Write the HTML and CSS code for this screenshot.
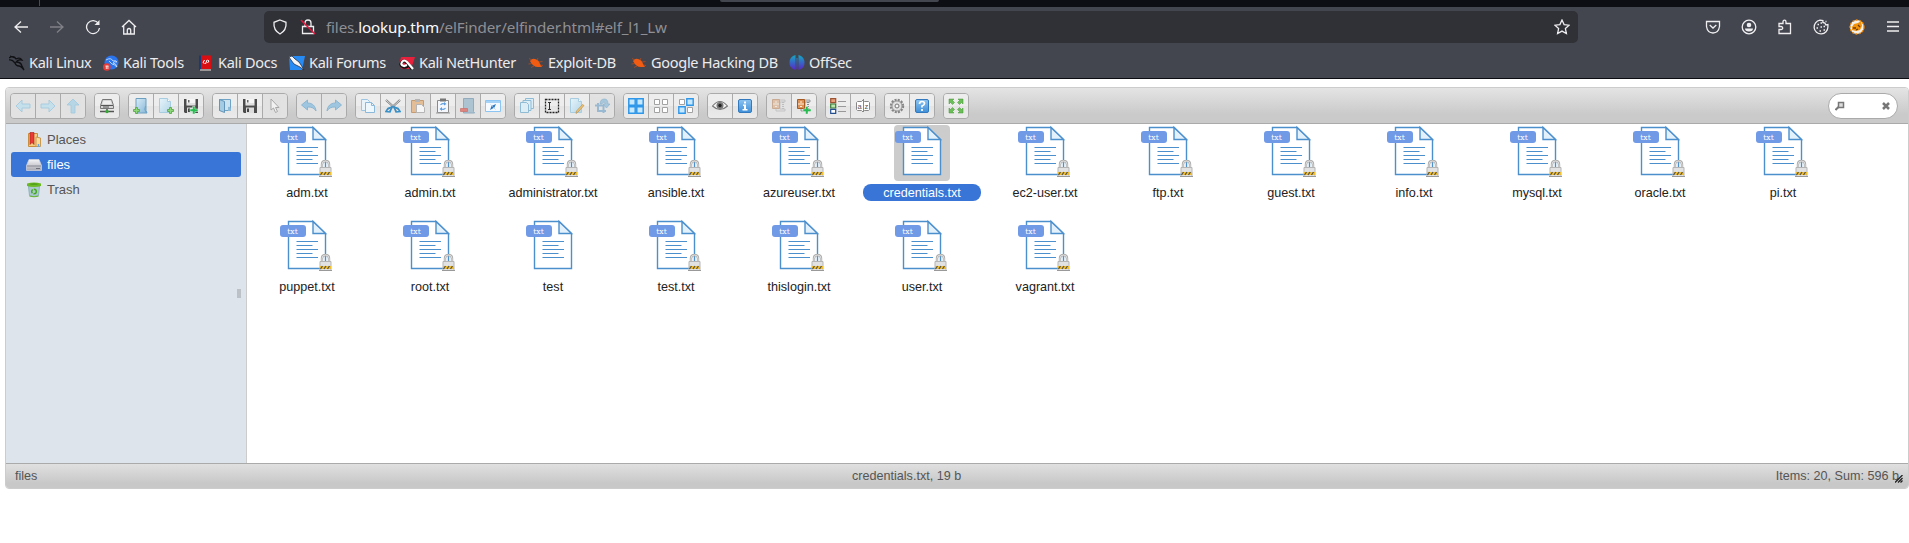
FILE: index.html
```html
<!DOCTYPE html>
<html lang="en">
<head>
<meta charset="utf-8">
<title>elFinder</title>
<link rel="stylesheet" href="styles.css">
</head>
<body>
<svg class="defs" width="0" height="0">
<defs>
<linearGradient id="blue" x1="0" y1="0" x2="1" y2="1"><stop offset="0" stop-color="#d8ecf6"/><stop offset="1" stop-color="#86b6d8"/></linearGradient>
<linearGradient id="pale" x1="0" y1="0" x2="1" y2="1"><stop offset="0" stop-color="#e6f4fa"/><stop offset="1" stop-color="#b4d6e8"/></linearGradient>
<linearGradient id="sq" x1="0" y1="0" x2="0" y2="1"><stop offset="0" stop-color="#8cc4f0"/><stop offset="1" stop-color="#3f8fd8"/></linearGradient>
<linearGradient id="os" x1="0" y1="0" x2="0" y2="1"><stop offset="0" stop-color="#12a9c4"/><stop offset="1" stop-color="#5a26c8"/></linearGradient>
<linearGradient id="metal" x1="0" y1="0" x2="0" y2="1"><stop offset="0" stop-color="#f4f4f6"/><stop offset="1" stop-color="#a9a9b2"/></linearGradient>
<symbol id="plus" viewBox="0 0 16 16"><path d="M2 0h2v2h2v2H4v2H2V4H0V2h2z" fill="#8ed67a" stroke="#4ea63c" stroke-width=".8" transform="translate(.5 .5)"/></symbol>
<symbol id="doc" viewBox="0 0 16 16"><path d="M2.500 .5h8l3 3v11h-11z" fill="url(#pale)" stroke="#a9cde0"/><path d="M10.500 .5v3h3" fill="#fff" stroke="#a9cde0"/></symbol>
<symbol id="i-back" viewBox="0 0 16 16"><path d="M1 8l6-6v4h8v4H7v4z" fill="#bfdfee" stroke="#8fc3de" stroke-width=".8"/></symbol>
<symbol id="i-fwd" viewBox="0 0 16 16"><path d="M15 8L9 2v4H1v4h8v4z" fill="#bfdfee" stroke="#8fc3de" stroke-width=".8"/></symbol>
<symbol id="i-up" viewBox="0 0 16 16"><path d="M8 1l6 6h-4v8H6V7H2z" fill="#acd3e6" stroke="#8fc3de" stroke-width=".8"/></symbol>
<symbol id="i-net" viewBox="0 0 16 16"><path d="M3.500 1.500h9l2 6v3h-13v-3z" fill="#d5d5d5" stroke="#777"/><path d="M4.500 3h7l1 3h-9z" fill="#eee"/><path d="M2 7.500h12M4 9h6" stroke="#555"/><path d="M8 11v2M1 13.500h14" stroke="#555" stroke-width="1.500"/><circle cx="8" cy="13.500" r="1.700" fill="#35a835"/></symbol>
<symbol id="i-mkdir" viewBox="0 0 16 16"><path d="M3 .5h10v12l1 2.500H3z" fill="url(#blue)" stroke="#6d9fc0"/><path d="M12.500 8q-2 3 1 7" fill="none" stroke="#6da4c8"/><use href="#plus" x="0" y="9" width="16" height="16"/></symbol>
<symbol id="i-mkfile" viewBox="0 0 16 16"><use href="#doc" x="-1" width="16" height="16"/><use href="#plus" x="9" y="9" width="16" height="16"/></symbol>
<symbol id="i-save" viewBox="0 0 16 16"><path d="M1 1h14v14H2l-1-1z" fill="#4c4c4c"/><path d="M3.500 1h9v6.500h-9z" fill="#f5f5f5"/><path d="M5 2h1.500v2.500H5z" fill="#666"/><path d="M4 6h8" stroke="#ccc"/><path d="M4 9.500h8V15H4z" fill="#dcdcdc"/><path d="M5 10.500h2V14H5z" fill="#444"/></symbol>
<symbol id="i-upload" viewBox="0 0 16 16"><use href="#i-save" width="16" height="16"/><path d="M9.500 8.500H12V11h3v2.500h-3V16H9.500v-2.500H7V11h2.500z" fill="#27bb51" stroke="#e8f5ea" stroke-width=".5"/></symbol>
<symbol id="i-open" viewBox="0 0 16 16"><path d="M2.500 1.500h11v11h-11z" fill="#cbe2f0" stroke="#6fa3c6"/><path d="M2.500 1.500l5 2v11l-5-2z" fill="#a3cbe4" stroke="#6295b9"/><path d="M11 9q3-1 3 4h-3z" fill="#8ebbd8"/></symbol>
<symbol id="i-cursor" viewBox="0 0 16 16"><path d="M4 1l8 8.500H8.500l2 4-2 1-2-4.500L4 12z" fill="#f7f7f7" stroke="#999"/></symbol>
<symbol id="i-undo" viewBox="0 0 16 16"><path d="M.5 7L6.500 2v3c5 0 8 3 8.500 8-2-3-4-4-8.500-4v3z" fill="#8fc0e0" stroke="#69a3ca" stroke-width=".8"/></symbol>
<symbol id="i-redo" viewBox="0 0 16 16"><path d="M15.500 7L9.500 2v3C4.500 5 1.500 8 1 13c2-3 4-4 8.500-4v3z" fill="#8fc0e0" stroke="#69a3ca" stroke-width=".8"/></symbol>
<symbol id="i-copy" viewBox="0 0 16 16"><path d="M1.500 1.500h6l2 2v9h-8z" fill="#e8f3fa" stroke="#9dc4e0"/><path d="M5.500 4.500h6l3 3v7h-9z" fill="#eef7fc" stroke="#8cb9da"/><path d="M11.500 4.500v3h3" fill="none" stroke="#8cb9da"/></symbol>
<symbol id="i-cut" viewBox="0 0 16 16"><path d="M1 2l11 10M15 2L4 12" stroke="#777" stroke-width="2"/><path d="M1 2l11 10M15 2L4 12" stroke="#e8e8e8" stroke-width=".9"/><path d="M7 9l-4 1.500-2 3 4 .5zM9 9l4 1.500 2 3-4 .5z" fill="none" stroke="#3790c8" stroke-width="1.600"/></symbol>
<symbol id="i-paste" viewBox="0 0 16 16"><path d="M1.500 2.500h12v12h-12z" fill="#e3b482" stroke="#bd8b58"/><path d="M5 1h5v3H5z" fill="#aaa"/><path d="M6.500 6.500h5l3 3v5h-8z" fill="#fafafa" stroke="#aaa"/></symbol>
<symbol id="i-clip" viewBox="0 0 16 16"><path d="M2.500 2.500h11v12h-11z" fill="#f4f8fd" stroke="#8a8a8a"/><path d="M5 .500h6v3H5z" fill="#777"/><path d="M5.500 7q1.500-2 4-1M10.500 10q-1.500 2-4 1" fill="none" stroke="#5b9bdd" stroke-width="1.200"/><path d="M9 4v3.500l2.500-1.500zM7 9v4l-2.500-2z" fill="#5b9bdd"/><path d="M1 15h14" stroke="#999"/></symbol>
<symbol id="i-rm" viewBox="0 0 16 16"><path d="M3.500 .5h10v13l1 1.500h-11z" fill="#9fbccf" stroke="#7f9fb5"/><path d="M.5 10.500h7v3h-7z" fill="#df6f67" stroke="#c2554d" stroke-width=".7"/></symbol>
<symbol id="i-win" viewBox="0 0 16 16"><path d="M.5 2.500h15v11H.5z" fill="#f4faff" stroke="#8cc4f2"/><path d="M1 4h14" stroke="#a5d3f7" stroke-width="2"/><path d="M5 12l1.500-4L11 6 9.500 9.500z" fill="#2d78c0"/><path d="M5.500 6.500l5 5" stroke="#9ec6ea" stroke-width=".7"/></symbol>
<symbol id="i-dup" viewBox="0 0 16 16"><g fill="#dcedf5" stroke="#8fbbd5"><path d="M6.500 .5h8v10h-8z"/><path d="M4 2.500h8v10H4z"/><path d="M1.500 4.500h6l2 2v8h-8z"/></g></symbol>
<symbol id="i-sel" viewBox="0 0 16 16"><path d="M1.500 1.500h13v13h-13z" fill="none" stroke="#222" stroke-width="1.300" stroke-dasharray="2 1"/><path d="M4 4.500h3M4 11.500h3M5.500 4.500v7" stroke="#333"/></symbol>
<symbol id="i-edit" viewBox="0 0 16 16"><use href="#doc" x="-1" width="16" height="16"/><path d="M15 7.500l-6 6.500-2 1.500.5-2.500 6-6.500z" fill="#f2c26a" stroke="#b28a4e" stroke-width=".6"/></symbol>
<symbol id="i-resize" viewBox="0 0 16 16"><path d="M1 7.500h8.500V15M4 5v8h8" fill="none" stroke="#86b0cd" stroke-width="2"/><path d="M6 6Q6 1 10.500 1 14 1 14 6h2l-3.500 4L9 6h2q0-2-1-2T8 6z" fill="#98c1db" stroke="#75a5c6" stroke-width=".6"/></symbol>
<symbol id="i-all" viewBox="0 0 16 16"><path d="M.8.8h6.400v6.400H.8zM8.800.8h6.400v6.400H8.800zM.8 8.800h6.400v6.400H.8zM8.800 8.800h6.400v6.400H8.800z" fill="#c8e8fd" stroke="#2f97e8" stroke-width="1.500"/></symbol>
<symbol id="i-none" viewBox="0 0 16 16"><path d="M1.500 1.500h5v5h-5zM9.500 1.500h5v5h-5zM1.500 9.500h5v5h-5zM9.500 9.500h5v5h-5z" fill="#fff" stroke="#a2a2a2"/></symbol>
<symbol id="i-inv" viewBox="0 0 16 16"><path d="M1.500 1.500h5v5h-5zM9.500 9.500h5v5h-5z" fill="#fff" stroke="#a2a2a2"/><path d="M8.800.8h6.400v6.400H8.800zM.8 8.800h6.400v6.400H.8z" fill="#c8e8fd" stroke="#2f97e8" stroke-width="1.400"/></symbol>
<symbol id="i-eye" viewBox="0 0 16 16"><path d="M.5 8Q8-1 15.500 8 8 15 .5 8z" fill="#f4f4f4" stroke="#777" stroke-width="1.100"/><circle cx="8" cy="7.500" r="3.500" fill="#777"/><circle cx="8" cy="7.500" r="1.700" fill="#222"/></symbol>
<symbol id="i-info" viewBox="0 0 16 16"><rect x="1.500" y="1.500" width="13" height="13" rx="1.500" fill="url(#sq)" stroke="#3379bd"/><path d="M7 3.500h2v2H7zM6 6.500h3v4.500h1.500v1.500h-5V11H7V8H6z" fill="#fff"/></symbol>
<symbol id="i-zip" viewBox="0 0 16 16"><path d="M5 2h9v2H9v7h5v2H5z" fill="#ddd" stroke="#8a8a8a" stroke-width=".8"/><path d="M12 4v8" stroke="#888" stroke-width="2" stroke-dasharray="1 1"/><path d="M1.500 1.500h7v9h-7z" fill="#dd9257" stroke="#a65b22"/><path d="M2 6h6M4 4h2M4 8.500h2" stroke="#fff0dd"/></symbol>
<symbol id="i-zipadd" viewBox="0 0 16 16"><use href="#i-zip" width="16" height="16"/><path d="M9.500 8.500h2.500V11h3v2.500h-3V16H9.500v-2.500H7V11h2.500z" fill="#27bb51" stroke="#fff" stroke-width=".4"/></symbol>
<symbol id="i-view" viewBox="0 0 16 16"><path d="M.7.700h5v4h-5z" fill="#e9a27d" stroke="#9c5332" stroke-width="1.200"/><path d="M.7 6h5v4h-5z" fill="#bce5b0" stroke="#397a35" stroke-width="1.200"/><path d="M.7 11.300h5v4h-5z" fill="#fff" stroke="#234f8f" stroke-width="1.200"/><path d="M8 3.500h8M8 8.500h8M8 13.500h8" stroke="#999"/></symbol>
<symbol id="i-sort" viewBox="0 0 16 16"><path d="M2.500 3.500h4L8 2l1.500 1.500h4l1 1v7l-1 1h-4L8 14l-1.500-1.500h-4l-1-1v-7z" fill="#fff" stroke="#888"/><path d="M8.500 1v13" stroke="#888"/><text x="2.400" y="11" class="az">a</text><text x="9.600" y="11" class="az">z</text></symbol>
<symbol id="i-gear" viewBox="0 0 16 16"><circle cx="8" cy="8" r="6" fill="#ddd" stroke="#858585" stroke-width="2.400" stroke-dasharray="2 1.140"/><circle cx="8" cy="8" r="5" fill="#e2e2e2" stroke="#999"/><circle cx="8" cy="8" r="2" fill="#f5f5f5" stroke="#777"/></symbol>
<symbol id="i-help" viewBox="0 0 16 16"><rect x="1.500" y="1.500" width="13" height="13" rx="1.500" fill="url(#sq)" stroke="#3379bd"/><path d="M5.500 6q0-2.500 2.500-2.500t2.500 2Q10.500 7 8 8v1.500M8 11v2" fill="none" stroke="#fff" stroke-width="1.700"/></symbol>
<symbol id="i-full" viewBox="0 0 16 16"><path d="M1 1h5L4.500 2.500l2 2-2 2-2-2L1 6zM15 1v5l-1.500-1.500-2 2-2-2 2-2L10 1zM1 15v-5l1.500 1.500 2-2 2 2-2 2L6 15zM15 15h-5l1.500-1.500-2-2 2-2 2 2L15 10z" fill="#6abf57" stroke="#459239" stroke-width=".5"/></symbol>
<symbol id="page" viewBox="0 0 56 56"><path d="M9.500 2.500h24.500l12.500 12v35h-37z" fill="#fff" stroke="#4b8fcd" stroke-width="1.400"/><path d="M34 2.500v12h12.500z" fill="#e3f1fc" stroke="#4b8fcd" stroke-width="1.400"/><path d="M17.500 22.500H39M17.500 26.500h16M17.500 30.500H39M17.500 34.500h16M17.500 38.500H39" stroke="#4b8fcd" stroke-width="1.200"/><rect x="1" y="6" width="26" height="12" rx="3" fill="#7099e6"/><text x="13.500" y="15.300" class="ext">txt</text></symbol>
<symbol id="lock" viewBox="0 0 13 17"><path d="M3 9V4.500Q3 1 6.500 1T10 4.500V9" fill="none" stroke="#aaa" stroke-width="2.400"/><path d="M3 9V4.500Q3 1 6.500 1T10 4.500V9" fill="none" stroke="#eee" stroke-width=".8"/><path d="M1 7.500h11v9H1z" fill="#e2e2e2" stroke="#b5b5b5"/><path d="M1 12h11v3H1z" fill="#f3bf2b"/><path d="M1.500 15l2-3M5 15l2-3M8.500 15l2-3" stroke="#555" stroke-width="1.300"/><path d="M0 16.500h13" stroke="#999"/></symbol>
<symbol id="spider" viewBox="0 0 16 16"><path d="M2 6q2-3 5-2 4 1 5 5l2 3-4 0Q5 12 2 6z" fill="#f25c12"/><path d="M4 5L1 3.500M4 8.500L.5 9M6 11l-3 1.500M9 5l1-2M11 7l3.500-.5M12 10l3 .5" stroke="#c34c18" stroke-width=".7"/></symbol>
</defs>
</svg>

<header class="browser">
  <div class="tabstrip"><span class="tab-sep"></span><span class="tab-edge"></span></div>
  <div class="navbar">
    <div class="nav-buttons">
      <svg class="ic" viewBox="0 0 16 16"><path d="M15 8H2M8 2.500L2 8l6 5.500"/></svg>
      <svg class="ic dim" viewBox="0 0 16 16"><path d="M1 8h13M8 2.500L14 8l-6 5.500"/></svg>
      <svg class="ic" viewBox="0 0 16 16"><path d="M13.500 4.500A6.500 6.500 0 1 0 14.500 9"/><path d="M14.500 1v5h-5z" class="solid"/></svg>
      <svg class="ic" viewBox="0 0 16 16"><path d="M1 8l7-6.500L15 8M2.700 7v8h10.600V7M6.300 15v-3.500q0-2 1.700-2t1.700 2V15"/></svg>
    </div>
    <div class="urlbar">
      <svg class="ic shield" viewBox="0 0 16 16"><path d="M8 1l6 2.300q.8 8-6 11.700Q1.200 11.300 2 3.300z"/></svg>
      <svg class="ic padlock" viewBox="0 0 16 16"><path d="M2.500 7.500h11v7h-11zM5 7V4q0-3 3-3t3 3v3"/><path d="M1 1l14 14" class="red"/></svg>
      <span class="url">files.<b>lookup.thm</b>/elFinder/elfinder.html#elf_l1_Lw</span>
      <svg class="ic" viewBox="0 0 16 16"><path d="M8 1l2.100 4.600 5 .6-3.700 3.400 1 5L8 12.100l-4.400 2.500 1-5L.9 6.200l5-.6z"/></svg>
    </div>
    <div class="ext-buttons">
      <svg class="ic" viewBox="0 0 16 16"><path d="M1.500 2.500h13v5q-1 6.500-6.500 6.500T1.500 7.500zM4.700 6L8 9l3.300-3"/></svg>
      <svg class="ic" viewBox="0 0 16 16"><circle cx="8" cy="8" r="6.800"/><circle cx="8" cy="6" r="2.300" class="solid"/><path d="M4 9.500h8q0 3-4 3t-4-3z" class="solid"/></svg>
      <svg class="ic" viewBox="0 0 16 16"><path d="M2 14.500v-4h2q1.700 0 1.700-1.500T4 7.500H2v-3h4V3q0-1.800 1.500-1.800T9 3v1.500h4.500v10z"/></svg>
      <svg class="ic" viewBox="0 0 16 16"><path d="M7 1.200A6.900 6.900 0 1 0 14.900 8V5.500l-2 .5-1-2-2-.5V1.500z"/><path d="M4.500 5.500h1.500M3.500 9h1.500M7.500 8h1.500M6.500 12h1.500M10.500 11h1.500M10.500 7.500h1.500M7.500 4h1.500M12.500 2.500h1" class="dots"/></svg>
      <svg class="ic" viewBox="0 0 16 16"><circle cx="8" cy="8" r="7" fill="#f4f0e8" stroke="#f08705" stroke-width="1.300" stroke-dasharray="2 1.500"/><path d="M3 8l2-3 4-1 3-2 1 5-2 4-4 1-4-1z" fill="#f2920b" stroke="none"/><path d="M4 9h3M9 6l2 2M7 11l2-1" stroke="#6c3c10"/></svg>
      <svg class="ic" viewBox="0 0 16 16"><path d="M2 3h12M2 7.500h12M2 12h12"/></svg>
    </div>
  </div>
  <nav class="bookmarks">
    <span class="bm b1"><svg viewBox="0 0 16 16"><path d="M0 3q5-3 7 1 4-2 6 1-4-1-6 2 5 0 6 4l2 4q-3-4-5-4-3 0-4-3Q3 4 0 5M1 1l5 2" fill="none" stroke="#111215" stroke-width="1.300"/></svg><i>Kali Linux</i></span>
    <span class="bm b2"><svg viewBox="0 0 16 16"><circle cx="8.500" cy="7.500" r="7" fill="#2a74ee"/><path d="M3 5q5-3 7 1 3-1 4 1-3-1-4 1 3 0 4 4-3-3-5-3L6 6" fill="none" stroke="#d9e8fb" stroke-width=".8"/><circle cx="3.800" cy="12" r="3.800" fill="#e33b37"/><path d="M2.500 11h3M3.300 11v3M4.900 11v3" stroke="#fff" stroke-width=".8"/></svg><i>Kali Tools</i></span>
    <span class="bm b3"><svg viewBox="0 0 16 16"><path d="M1 .5h2V15H1z" fill="#173a79"/><path d="M3 .5h10V14H3z" fill="#d90e13"/><path d="M2 15h11" stroke="#d8ccc4" stroke-width="1.200"/><path d="M6.500 5L5 7.500 6.500 8.500M7.500 9L9 5M9.500 5l1.500 1-1.500 2" fill="none" stroke="#fff" stroke-width="1"/></svg><i>Kali Docs</i></span>
    <span class="bm b4"><svg viewBox="0 0 16 16"><path d="M0 1h16l-3 14H1z" fill="#278bf5"/><path d="M0 2l3-1 3 3 4 3 2 3 3 5-4-3-6-3-3-4z" fill="#f5f5f5" stroke="#15233a" stroke-width=".7"/></svg><i>Kali Forums</i></span>
    <span class="bm b5"><svg viewBox="0 0 16 16"><path d="M2 2h14l-4 12H3L0 10z" fill="#e8203c"/><path d="M13 14l-6-7q-2-2-4 0-3 3 1 5 3 1 5-1" fill="none" stroke="#111" stroke-width="3"/><path d="M14 14L8 7Q5 4 3 7q-2 3 2 4l3-1" fill="none" stroke="#fff" stroke-width="2.200"/></svg><i>Kali NetHunter</i></span>
    <span class="bm b6"><svg viewBox="0 0 16 16"><use href="#spider"/></svg><i>Exploit-DB</i></span>
    <span class="bm b7"><svg viewBox="0 0 16 16"><use href="#spider"/></svg><i>Google Hacking DB</i></span>
    <span class="bm b8"><svg viewBox="0 0 16 16"><path d="M4 1l2.500-1v15L4 14Q.5 12 .5 7.500T4 1zM12 1L9.500 0v15l2.500-1q3.500-2 3.500-6.500T12 1zM7.500 3h1v11h-1z" fill="url(#os)"/></svg><i>OffSec</i></span>
  </nav>
</header>

<main class="elfinder">
  <div class="toolbar">
    <div class="set"><span class="btn off"><svg><use href="#i-back"/></svg></span><span class="btn off"><svg><use href="#i-fwd"/></svg></span><span class="btn off"><svg><use href="#i-up"/></svg></span></div>
    <div class="set"><span class="btn"><svg><use href="#i-net"/></svg></span></div>
    <div class="set"><span class="btn"><svg><use href="#i-mkdir"/></svg></span><span class="btn"><svg><use href="#i-mkfile"/></svg></span><span class="btn"><svg><use href="#i-upload"/></svg></span></div>
    <div class="set"><span class="btn"><svg><use href="#i-open"/></svg></span><span class="btn"><svg><use href="#i-save"/></svg></span><span class="btn off"><svg><use href="#i-cursor"/></svg></span></div>
    <div class="set"><span class="btn off"><svg><use href="#i-undo"/></svg></span><span class="btn off"><svg><use href="#i-redo"/></svg></span></div>
    <div class="set"><span class="btn"><svg><use href="#i-copy"/></svg></span><span class="btn"><svg><use href="#i-cut"/></svg></span><span class="btn off"><svg><use href="#i-paste"/></svg></span><span class="btn"><svg><use href="#i-clip"/></svg></span><span class="btn off"><svg><use href="#i-rm"/></svg></span><span class="btn"><svg><use href="#i-win"/></svg></span></div>
    <div class="set"><span class="btn"><svg><use href="#i-dup"/></svg></span><span class="btn"><svg><use href="#i-sel"/></svg></span><span class="btn"><svg><use href="#i-edit"/></svg></span><span class="btn off"><svg><use href="#i-resize"/></svg></span></div>
    <div class="set"><span class="btn"><svg><use href="#i-all"/></svg></span><span class="btn"><svg><use href="#i-none"/></svg></span><span class="btn"><svg><use href="#i-inv"/></svg></span></div>
    <div class="set"><span class="btn"><svg><use href="#i-eye"/></svg></span><span class="btn"><svg><use href="#i-info"/></svg></span></div>
    <div class="set"><span class="btn off faded"><svg><use href="#i-zip"/></svg></span><span class="btn"><svg><use href="#i-zipadd"/></svg></span></div>
    <div class="set"><span class="btn"><svg><use href="#i-view"/></svg></span><span class="btn"><svg><use href="#i-sort"/></svg></span></div>
    <div class="set"><span class="btn"><svg><use href="#i-gear"/></svg></span><span class="btn"><svg><use href="#i-help"/></svg></span></div>
    <div class="set"><span class="btn"><svg><use href="#i-full"/></svg></span></div>
    <div class="search">
      <svg width="10" height="10" viewBox="0 0 10 10"><path d="M3.500 1.500h5v5h-5z" fill="#ddd" stroke="#777" stroke-width="1.500"/><path d="M3.500 6L.5 9" stroke="#777" stroke-width="2"/></svg>
      <svg width="8" height="8" viewBox="0 0 8 8"><path d="M1 1l6 6M7 1L1 7" stroke="#777" stroke-width="2.500"/></svg>
    </div>
  </div>

  <div class="workzone">
    <aside class="navtree">
      <div class="node"><svg viewBox="0 0 16 16"><path d="M2.500 1.500h9v13h-9z" fill="#f5cd7c" stroke="#c78f3f"/><path d="M10 5l4.500 1v8.500H10z" fill="#f9dc9b" stroke="#c99a50"/><path d="M4 .5h4v12l-2-2-2 2z" fill="#e83b36" stroke="#a91d1d" stroke-width=".6"/><path d="M12.500 12v3" stroke="#6aa5dc" stroke-width="1.500"/></svg>Places</div>
      <div class="node active"><svg viewBox="0 0 16 16"><path d="M3 2.500h10l2.500 6v5H.5v-5z" fill="url(#metal)" stroke="#d4d4dc" stroke-width=".7"/><path d="M1 9h14" stroke="#888893"/><path d="M10 11.500h4" stroke="#70707a"/></svg>files</div>
      <div class="node"><svg viewBox="0 0 16 16"><path d="M2.500 4h11l-1 9.500q-4.500 2-9 0z" fill="#a9c9cf" stroke="#8db2ba"/><path d="M1 1.500Q8-.5 15 1.500v2.500Q8 6 1 4z" fill="#6cba23"/><path d="M3 2q5-1 10 0-5 1-10 0" fill="#3f8c14"/><path d="M3.500 14q4.500 1.500 9 0" fill="none" stroke="#66b530" stroke-width="1.200"/><circle cx="8" cy="9.500" r="2.300" fill="none" stroke="#45aa1e" stroke-width="1.500" stroke-dasharray="3.800 1"/></svg>Trash</div>
      <span class="grip"></span>
    </aside>
    <section class="files">
      <div class="file"><span class="pic"><svg class="page"><use href="#page"/></svg><svg class="lock"><use href="#lock"/></svg></span><span class="name">adm.txt</span></div>
      <div class="file"><span class="pic"><svg class="page"><use href="#page"/></svg><svg class="lock"><use href="#lock"/></svg></span><span class="name">admin.txt</span></div>
      <div class="file"><span class="pic"><svg class="page"><use href="#page"/></svg><svg class="lock"><use href="#lock"/></svg></span><span class="name">administrator.txt</span></div>
      <div class="file"><span class="pic"><svg class="page"><use href="#page"/></svg><svg class="lock"><use href="#lock"/></svg></span><span class="name">ansible.txt</span></div>
      <div class="file"><span class="pic"><svg class="page"><use href="#page"/></svg><svg class="lock"><use href="#lock"/></svg></span><span class="name">azureuser.txt</span></div>
      <div class="file selected"><span class="pic"><svg class="page"><use href="#page"/></svg></span><span class="name">credentials.txt</span></div>
      <div class="file"><span class="pic"><svg class="page"><use href="#page"/></svg><svg class="lock"><use href="#lock"/></svg></span><span class="name">ec2-user.txt</span></div>
      <div class="file"><span class="pic"><svg class="page"><use href="#page"/></svg><svg class="lock"><use href="#lock"/></svg></span><span class="name">ftp.txt</span></div>
      <div class="file"><span class="pic"><svg class="page"><use href="#page"/></svg><svg class="lock"><use href="#lock"/></svg></span><span class="name">guest.txt</span></div>
      <div class="file"><span class="pic"><svg class="page"><use href="#page"/></svg><svg class="lock"><use href="#lock"/></svg></span><span class="name">info.txt</span></div>
      <div class="file"><span class="pic"><svg class="page"><use href="#page"/></svg><svg class="lock"><use href="#lock"/></svg></span><span class="name">mysql.txt</span></div>
      <div class="file"><span class="pic"><svg class="page"><use href="#page"/></svg><svg class="lock"><use href="#lock"/></svg></span><span class="name">oracle.txt</span></div>
      <div class="file"><span class="pic"><svg class="page"><use href="#page"/></svg><svg class="lock"><use href="#lock"/></svg></span><span class="name">pi.txt</span></div>
      <div class="file"><span class="pic"><svg class="page"><use href="#page"/></svg><svg class="lock"><use href="#lock"/></svg></span><span class="name">puppet.txt</span></div>
      <div class="file"><span class="pic"><svg class="page"><use href="#page"/></svg><svg class="lock"><use href="#lock"/></svg></span><span class="name">root.txt</span></div>
      <div class="file"><span class="pic"><svg class="page"><use href="#page"/></svg></span><span class="name">test</span></div>
      <div class="file"><span class="pic"><svg class="page"><use href="#page"/></svg><svg class="lock"><use href="#lock"/></svg></span><span class="name">test.txt</span></div>
      <div class="file"><span class="pic"><svg class="page"><use href="#page"/></svg><svg class="lock"><use href="#lock"/></svg></span><span class="name">thislogin.txt</span></div>
      <div class="file"><span class="pic"><svg class="page"><use href="#page"/></svg><svg class="lock"><use href="#lock"/></svg></span><span class="name">user.txt</span></div>
      <div class="file"><span class="pic"><svg class="page"><use href="#page"/></svg><svg class="lock"><use href="#lock"/></svg></span><span class="name">vagrant.txt</span></div>
    </section>
  </div>

  <footer class="statusbar">
    <span class="path">files</span>
    <span class="current">credentials.txt, 19 b</span>
    <span class="sum">Items: 20, Sum: 596 b</span>
    <svg class="resizer" width="8" height="8" viewBox="0 0 8 8"><path d="M0 7.500L7.500 0M3 7.500L7.500 3M5.500 7.500l2-2" stroke="#222" stroke-width="1.300"/></svg>
  </footer>
</main>
</body>
</html>
```
FILE: styles.css
```css
* { box-sizing: border-box; }
body {
  margin: 0;
  width: 1909px;
  height: 543px;
  overflow: hidden;
  background: #fff;
  font: 13px/16px "Liberation Sans", Arial, sans-serif;
}
svg { display: block; flex: none; }
.defs { position: absolute; }

/* Browser chrome */
.browser {
  height: 79px;
  background: #44464f;
  border-bottom: 1px solid #0c0d12;
  font-family: "Noto Sans", sans-serif;
  color: #ececee;
}
.tabstrip { display: flex; height: 7px; background: #0d0e13; }
.tab-sep { width: 1px; height: 6px; margin-left: 39px; background: #4a4b52; }
.tab-edge { width: 219px; height: 2px; margin-left: 680px; background: #44464f; border-radius: 0 0 3px 3px; }
.navbar { display: flex; align-items: center; height: 40px; }
.ic { width: 16px; height: 16px; fill: none; stroke: #eeeef0; stroke-width: 1.3; }
.ic .solid { fill: #eeeef0; stroke: none; }
.ic .red { stroke: #e2163f; stroke-width: 1.5; }
.ic .dots { stroke-width: 1.5; }
.dim { opacity: .35; }
.nav-buttons { display: flex; gap: 20px; padding-left: 13px; width: 264px; }
.urlbar {
  display: flex;
  align-items: center;
  width: 1314px;
  height: 32px;
  padding: 0 8px;
  background: #303136;
  border-radius: 5px;
}
.padlock { margin-left: 12px; }
.url { flex: 1; margin-left: 10px; font-size: 15.2px; letter-spacing: -.14px; color: #8f8f94; white-space: nowrap; }
.url b { font-weight: 400; color: #fbfbfe; }
.ext-buttons { display: flex; gap: 20px; margin-left: 127px; }
.bookmarks { display: flex; height: 31px; padding-left: 9px; align-items: center; }
.bm { display: flex; align-items: center; gap: 4px; font-size: 14.5px; letter-spacing: -.28px; white-space: nowrap; }
.bm svg { width: 16px; height: 16px; }
.bm i { font-style: normal; margin-top: -2px; }
.b1 { width: 94px; }
.b2 { width: 95px; }
.b3 { width: 91px; }
.b4 { width: 110px; }
.b5 { width: 129px; }
.b6 { width: 103px; }
.b7 { width: 158px; }

/* File manager */
.elfinder {
  width: 1904px;
  height: 402px;
  margin: 8px 0 0 5px;
  border: 1px solid #ccc;
  border-radius: 4px;
  overflow: hidden;
}
.toolbar {
  display: flex;
  gap: 8px;
  height: 36px;
  padding: 5px 10px 0 4px;
  background: linear-gradient(#e4e4e4, #cacaca 75%);
  border-bottom: 1px solid #aaa;
}
.set {
  display: flex;
  height: 26px;
  border: 1px solid #aaa;
  border-radius: 4px;
  overflow: hidden;
}
.btn {
  width: 25px;
  height: 24px;
  padding: 4px;
  background: linear-gradient(#ededed 50%, #e4e4e4 50%, #eaeaea);
  border-left: 1px solid #aaa;
}
.btn:first-child { width: 24px; border-left: 0; }
.btn.off { background: #e2e2e2; }
.btn svg { width: 16px; height: 16px; }
.btn.off svg { opacity: .8; }
.btn.faded svg { opacity: .4; }
.az { font: 7.5px "Liberation Sans", sans-serif; fill: #555; }
.search {
  display: flex;
  align-items: center;
  justify-content: space-between;
  width: 70px;
  height: 26px;
  margin-left: auto;
  padding: 0 7px 0 6px;
  background: #fff;
  border: 1px solid #aaa;
  border-radius: 13px;
}
.workzone { display: flex; height: 339px; }
.navtree {
  position: relative;
  width: 241px;
  padding: 3px 5px;
  background: #dde4eb;
  border-right: 1px solid #ccc;
}
.node {
  display: flex;
  align-items: center;
  gap: 5px;
  height: 25px;
  padding-left: 15px;
  border-radius: 3px;
  color: #555;
}
.node svg { width: 16px; height: 16px; }
.node.active { background: #3875d7; color: #fff; }
.grip { position: absolute; right: 5px; top: 165px; width: 4px; height: 9px; background: #bcc1c7; }
.files {
  display: grid;
  grid-template-columns: repeat(13, 123px);
  grid-auto-rows: 94px;
  align-content: start;
  flex: 1;
  font-size: 12.6px;
  color: #222;
}
.file { display: flex; flex-direction: column; align-items: center; padding-top: 1px; width: 120px; }
.pic { position: relative; width: 56px; height: 56px; border-radius: 4px; }
.page { width: 56px; height: 56px; }
.lock { position: absolute; left: 40px; top: 35px; width: 13px; height: 17px; }
.ext { font: 7.6px "DejaVu Serif", serif; fill: #fff; text-anchor: middle; }
.name { width: 118px; height: 17px; margin-top: 3px; padding-top: 1px; line-height: 17px; text-align: center; border-radius: 8px; }
.selected .pic { background: #ccc; }
.selected .name { background: #3875d7; color: #fff; }
.statusbar {
  position: relative;
  display: grid;
  grid-template-columns: 837px auto 1fr;
  height: 25px;
  padding: 4px 9px 0;
  background: linear-gradient(#e0e0e0, #c8c8c8 80%);
  border-top: 1px solid #aaa;
  font-size: 12.6px;
  color: #555;
}
.sum { text-align: right; }
.resizer { position: absolute; right: 5px; bottom: 5px; }
```
